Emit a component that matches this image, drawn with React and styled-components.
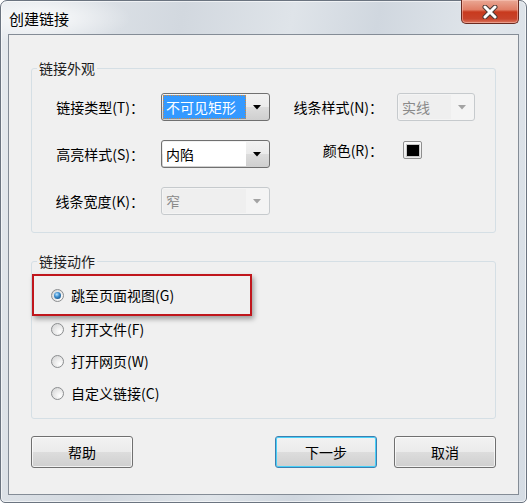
import React from 'react';
import styled, { createGlobalStyle } from 'styled-components';

const GlobalStyle = createGlobalStyle`
  html, body {
    margin: 0;
    padding: 0;
    background: #fff;
  }
  body {
    font-family: "Noto Sans CJK SC", "Noto Sans", sans-serif;
    font-size: 14px;
    color: #000;
  }
`;

const Window = styled.div`
  width: 527px;
  height: 503px;
  box-sizing: border-box;
  display: flex;
  flex-direction: column;
  padding: 0 7px 7px 7px;
  border: 1px solid #6b7480;
  border-radius: 7px 7px 5px 5px;
  background:
    radial-gradient(ellipse 90px 26px at 40px 17px, rgba(255, 255, 255, 0.85), rgba(255, 255, 255, 0) 100%),
    linear-gradient(100deg, #e6eaee 0%, #d2d8df 30%, #dfe4e9 48%, #d0d7df 62%, #e1e6eb 80%, #d5dce4 100%);
  box-shadow: inset 0 0 0 1px rgba(255, 255, 255, 0.6);
`;

const TitleBar = styled.div`
  height: 33px;
  display: flex;
  justify-content: space-between;
  align-items: flex-start;
`;

const Title = styled.div`
  padding: 8px 0 0 1px;
  font-size: 15px;
  line-height: 20px;
`;

const CloseButton = styled.div`
  width: 58px;
  height: 24px;
  margin-top: -1px;
  box-sizing: border-box;
  display: flex;
  align-items: center;
  justify-content: center;
  border: 1px solid #6a2a20;
  border-top: none;
  border-radius: 0 0 5px 5px;
  background: linear-gradient(#eaa895 0%, #e07e66 42%, #c83a1e 52%, #c8432a 82%, #dc7760 100%);
  box-shadow: inset 0 0 0 1px rgba(255, 210, 200, 0.45);
`;

const Client = styled.div`
  flex: 1;
  display: flex;
  flex-direction: column;
  padding: 24px 22px 0 22px;
  border: 1px solid #848c96;
  background: #f0f0f0;
`;

const Group = styled.fieldset`
  margin: ${p => p.$top || 0}px 0 0 0;
  padding: ${p => p.$pad};
  border: 1px solid #d5dfe5;
  border-radius: 3px;
  min-width: 0;
`;

const Legend = styled.legend`
  margin-left: 5px;
  padding: 0 2px;
  font-size: 14px;
  line-height: 18px;
  color: #1e1e1e;
`;

const FieldGrid = styled.div`
  display: grid;
  grid-template-columns: 109px 109px 127px 78px;
  grid-auto-rows: 28px;
  row-gap: 19px;
  align-items: center;
  padding-left: 20px;
`;

const Label = styled.div`
  line-height: 18px;
  white-space: nowrap;
  justify-self: end;
  padding-right: ${p => (p.$right ? 14 : 17)}px;
  align-self: ${p => (p.$up ? 'start' : 'center')};
  margin-top: ${p => (p.$up ? 1 : 0)}px;
`;

const Combo = styled.div`
  box-sizing: border-box;
  height: 28px;
  display: flex;
  padding: 1px;
  border: 1px solid ${p => (p.$disabled ? '#c6cacd' : '#707070')};
  border-radius: 3px;
  background: ${p =>
    p.$disabled
      ? '#f4f4f4'
      : 'linear-gradient(#f2f2f2 0%, #ebebeb 50%, #dddddd 50%, #cfcfcf 100%)'};
`;

const Field = styled.div`
  flex: 1;
  display: flex;
  align-items: center;
  box-sizing: border-box;
  padding-left: 2px;
  line-height: 18px;
  color: ${p => (p.$selected ? '#fff' : p.$disabled ? '#8a8a8a' : '#000')};
  background: ${p => (p.$selected ? '#3399ff' : p.$disabled ? '#efefef' : '#fff')};
  border: 1px ${p => (p.$selected ? 'dotted #d08a40' : 'solid transparent')};
`;

const Arrow = styled.div`
  width: 22px;
  display: flex;
  align-items: center;
  justify-content: center;
`;

const Swatch = styled.div`
  align-self: start;
  margin: 1px 0 0 6px;
  width: 19px;
  height: 18px;
  box-sizing: border-box;
  display: flex;
  align-items: center;
  justify-content: center;
  border: 1px solid #8f8f8f;
  border-radius: 2px;
  background: linear-gradient(#fbfbfb, #e9e9e9);
`;

const SwatchColor = styled.div`
  width: 12px;
  height: 11px;
  background: #000;
  box-shadow: 0 0 0 1px #c8c8c8;
`;

const OptionList = styled.div`
  display: flex;
  flex-direction: column;
  gap: 6px;
`;

const Option = styled.div`
  box-sizing: border-box;
  height: ${p => (p.$highlight ? 42 : 26)}px;
  width: ${p => (p.$highlight ? '220px' : 'auto')};
  margin-bottom: ${p => (p.$highlight ? -6 : 0)}px;
  display: flex;
  align-items: center;
  gap: 7px;
  padding-left: ${p => (p.$highlight ? 17 : 19)}px;
  line-height: 18px;
  border: ${p => (p.$highlight ? '2px solid #c0161c' : 'none')};
  box-shadow: ${p => (p.$highlight ? '2px 3px 5px rgba(0, 0, 0, 0.35)' : 'none')};
`;

const Radio = styled.span`
  width: 13px;
  height: 13px;
  box-sizing: border-box;
  border-radius: 50%;
  display: flex;
  align-items: center;
  justify-content: center;
  border: 1px solid #8b8d8f;
  background: radial-gradient(circle at 70% 70%, #ffffff 0%, #eaeaea 45%, #cfd0d1 100%);

  &::after {
    content: '';
    display: ${p => (p.$checked ? 'block' : 'none')};
    width: 7px;
    height: 7px;
    border-radius: 50%;
    background: radial-gradient(circle at 40% 35%, #bfe6ff 0%, #3d8fd0 40%, #0d3c68 100%);
  }
`;

const ButtonRow = styled.div`
  margin-top: 17px;
  display: flex;
  gap: 17px;
`;

const Button = styled.div`
  width: 102px;
  height: 32px;
  box-sizing: border-box;
  display: flex;
  align-items: center;
  justify-content: center;
  margin-right: ${p => (p.$push ? 'auto' : 0)};
  border: 1px solid ${p => (p.$default ? '#3c7fb1' : '#707070')};
  border-radius: 3px;
  background: linear-gradient(#f2f2f2 0%, #ebebeb 50%, #dddddd 50%, #cfcfcf 100%);
  box-shadow: ${p =>
    p.$default ? 'inset 0 0 0 1px #48d0f8' : 'inset 0 0 0 1px rgba(255, 255, 255, 0.7)'};
  line-height: 18px;
`;

const DownArrow = ({ disabled }) => (
  <svg width="8" height="5" viewBox="0 0 8 5">
    <polygon points="0,0 8,0 4,4.5" fill={disabled ? '#a3a3a3' : '#000'} />
  </svg>
);

const CloseIcon = () => (
  <svg width="16" height="14" viewBox="0 0 16 14">
    <path d="M3 2 L13 12 M13 2 L3 12" stroke="#4a3a36" strokeWidth="5" strokeLinecap="round" />
    <path d="M3 2 L13 12 M13 2 L3 12" stroke="#ffffff" strokeWidth="3" strokeLinecap="round" />
  </svg>
);

const ComboBox = ({ value, selected, disabled }) => (
  <Combo $disabled={disabled}>
    <Field $selected={selected} $disabled={disabled}>{value}</Field>
    <Arrow>
      <DownArrow disabled={disabled} />
    </Arrow>
  </Combo>
);

const actions = [
  { label: '跳至页面视图(G)', checked: true },
  { label: '打开文件(F)' },
  { label: '打开网页(W)' },
  { label: '自定义链接(C)' },
];

export default function App() {
  return (
    <>
      <GlobalStyle />
      <Window>
        <TitleBar>
          <Title>创建链接</Title>
          <CloseButton>
            <CloseIcon />
          </CloseButton>
        </TitleBar>
        <Client>
          <Group $pad="16px 0 17px 0">
            <Legend>链接外观</Legend>
            <FieldGrid>
              <Label>链接类型(T)：</Label>
              <ComboBox value="不可见矩形" selected />
              <Label $right>线条样式(N)：</Label>
              <ComboBox value="实线" disabled />

              <Label>高亮样式(S)：</Label>
              <ComboBox value="内陷" />
              <Label $right $up>颜色(R)：</Label>
              <Swatch>
                <SwatchColor />
              </Swatch>

              <Label>线条宽度(K)：</Label>
              <ComboBox value="窄" disabled />
            </FieldGrid>
          </Group>

          <Group $top={19} $pad="4px 0 12px 0">
            <Legend>链接动作</Legend>
            <OptionList>
              {actions.map(a => (
                <Option key={a.label} $highlight={a.checked}>
                  <Radio $checked={a.checked} />
                  {a.label}
                </Option>
              ))}
            </OptionList>
          </Group>

          <ButtonRow>
            <Button $push>帮助</Button>
            <Button $default>下一步</Button>
            <Button>取消</Button>
          </ButtonRow>
        </Client>
      </Window>
    </>
  );
}
